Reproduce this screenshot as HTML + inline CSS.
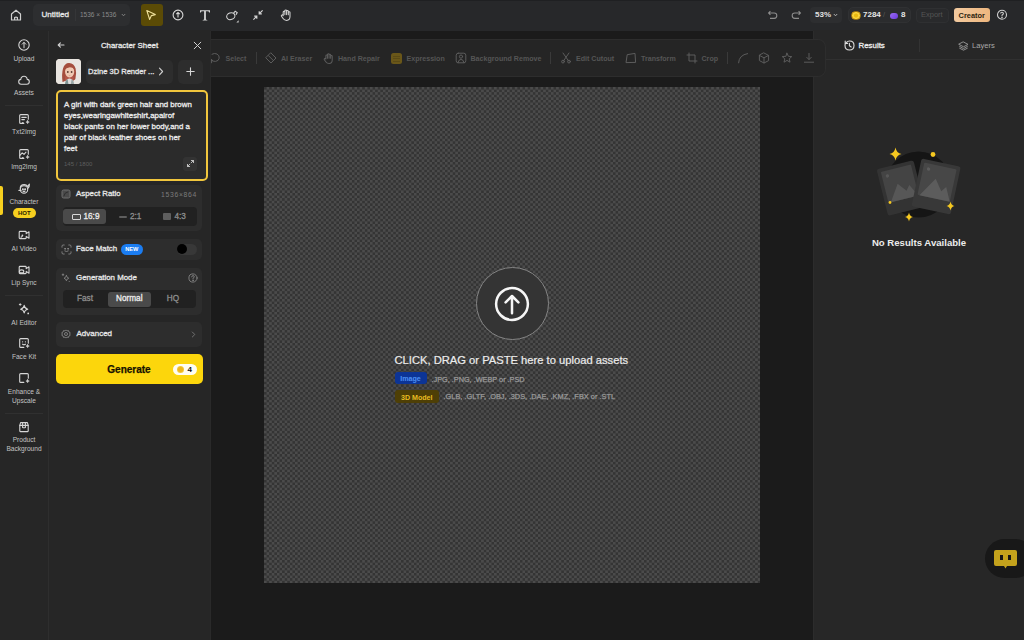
<!DOCTYPE html>
<html><head><meta charset="utf-8">
<style>
*{box-sizing:border-box;margin:0;padding:0}
html,body{width:1024px;height:640px;overflow:hidden;background:#1b1b1b;font-family:"Liberation Sans",sans-serif;color:#fff}
.abs{position:absolute}
svg{display:block}
#top{position:absolute;left:0;top:0;width:1024px;height:31px;background:#27282a;box-shadow:inset 0 1px 0 #1f2022}
#side{position:absolute;left:0;top:31px;width:49px;height:609px;background:#262626;border-right:1px solid #2e2e2e;box-shadow:0 -1px 0 #262626}
#panel{position:absolute;left:49px;top:31px;width:162px;height:609px;background:#262626;z-index:3;box-shadow:0 -1px 0 #262626;border-right:1px solid #2a2a2a}
#stage{position:absolute;left:210px;top:31px;width:603px;height:609px;background:#1b1b1b;overflow:visible;z-index:2}
#right{position:absolute;left:813px;top:31px;width:211px;height:609px;background:#272727;overflow:hidden;z-index:1;box-shadow:inset 1px 0 0 #2c2c2c,0 -1px 0 #272727}
.lbl{position:absolute;left:0;width:48px;text-align:center;font-size:6.6px;color:#c4c4c4;line-height:9px;white-space:nowrap}
.ico{position:absolute;left:16px;width:16px;height:16px}
.div{position:absolute;left:5px;width:38px;height:1px;background:#303030}
</style></head><body>
<div id="top">
 <svg class="abs" style="left:9px;top:8px" width="14" height="14" viewBox="0 0 14 14" fill="none" stroke="#cfcfcf" stroke-width="1.2" stroke-linejoin="round"><path d="M2.5 6 L7 2.2 L11.5 6 V12 H2.5 Z"/><path d="M5.6 12 V9.6 Q7 8.6 8.4 9.6 V12"/></svg>
 <div class="abs" style="left:33px;top:4px;width:97px;height:22px;background:#2d2e30;border-radius:5px"></div>
 <div class="abs" style="left:41.5px;top:8.8px;font-size:8.1px;font-weight:normal;-webkit-text-stroke:0.3px #e6e6e6;color:#e6e6e6;line-height:12px">Untitled</div>
 <div class="abs" style="left:75px;top:9px;width:1px;height:12px;background:#353638"></div>
 <div class="abs" style="left:80px;top:10px;font-size:6.5px;color:#8a8a8a;line-height:10px">1536 × 1536</div>
 <svg class="abs" style="left:121px;top:13px" width="5" height="4" viewBox="0 0 5 4" fill="none" stroke="#8a8a8a" stroke-width="0.9"><path d="M0.8 1 L2.5 2.8 L4.2 1"/></svg>
 <div class="abs" style="left:141px;top:4px;width:22px;height:22px;background:#5b4b06;border-radius:3px"></div>
 <svg class="abs" style="left:145px;top:9px" width="12" height="12" viewBox="0 0 12 12" fill="none" stroke="#efe09a" stroke-width="1.1" stroke-linejoin="round"><path d="M1.8 1.5 L10.3 5.6 L6.4 6.6 L4.6 10.4 Z"/></svg>
 <svg class="abs" style="left:172px;top:9px" width="12" height="12" viewBox="0 0 12 12" fill="none" stroke="#d8d8d8" stroke-width="1.1"><circle cx="6" cy="6" r="4.9"/><path d="M6 8.6 V3.6 M4.3 5.2 L6 3.5 L7.7 5.2"/></svg>
 <svg class="abs" style="left:199px;top:9px" width="12" height="12" viewBox="0 0 12 12"><path d="M1 1.2 H11 V3.6 H10.2 Q10 2.2 8.8 2.2 H6.9 V10.2 Q6.9 10.8 8.3 10.9 V11.4 H3.7 V10.9 Q5.1 10.8 5.1 10.2 V2.2 H3.2 Q2 2.2 1.8 3.6 H1 Z" fill="#d4d4d4"/></svg>
 <svg class="abs" style="left:225px;top:8px" width="16" height="16" viewBox="0 0 16 16" fill="none" stroke="#d4d4d4" stroke-width="1.1"><ellipse cx="5.8" cy="8.2" rx="4.2" ry="3.3" transform="rotate(-20 5.8 8.2)"/><path d="M8.6 5.2 L10.2 3.2 L12.2 4.6 L11 6.8"/><path d="M13.6 12.2 L13.6 14.4 L11.4 14.4 Z" fill="#d4d4d4" stroke="none"/></svg>
 <svg class="abs" style="left:252px;top:9px" width="12" height="12" viewBox="0 0 12 12" fill="none" stroke="#d4d4d4" stroke-width="1.2"><path d="M10.6 1.4 L7.4 4.6 M7.2 2.2 V4.8 H9.8"/><path d="M1.4 10.6 L4.6 7.4 M2.2 7.2 H4.8 V9.8"/></svg>
 <svg class="abs" style="left:279px;top:8px" width="14" height="14" viewBox="0 0 14 14" fill="none" stroke="#d4d4d4" stroke-width="1.05" stroke-linejoin="round" stroke-linecap="round"><path d="M4.2 7.6 V4 a0.85 0.85 0 0 1 1.7 0 V6.6 V2.8 a0.85 0.85 0 0 1 1.7 0 V6.6 V3.3 a0.85 0.85 0 0 1 1.7 0 V6.8 V4.6 a0.85 0.85 0 0 1 1.7 0 V8.6 Q11 12.4 7.6 12.4 Q5.4 12.4 4.3 10.8 L2.5 8.3 a0.85 0.85 0 0 1 1.4 -1 Z"/></svg>
 <svg class="abs" style="left:767px;top:9px" width="12" height="12" viewBox="0 0 12 12" fill="none" stroke="#8c8c8c" stroke-width="1.1"><path d="M3.4 2.2 L1.6 4 L3.4 5.8 M1.8 4 H7.2 Q9.8 4 9.8 6.6 Q9.8 9.4 7.2 9.4 H3"/></svg>
 <svg class="abs" style="left:790px;top:9px" width="12" height="12" viewBox="0 0 12 12" fill="none" stroke="#8c8c8c" stroke-width="1.1"><path d="M8.6 2.2 L10.4 4 L8.6 5.8 M10.2 4 H4.8 Q2.2 4 2.2 6.6 Q2.2 9.4 4.8 9.4 H9"/></svg>
 <div class="abs" style="left:810px;top:7px;width:32px;height:16px;background:#2d2e30;border-radius:4px"></div>
 <div class="abs" style="left:815px;top:10px;font-size:8px;font-weight:bold;color:#e0e0e0;line-height:10px">53%</div>
 <svg class="abs" style="left:833px;top:13px" width="5" height="4" viewBox="0 0 5 4" fill="none" stroke="#bdbdbd" stroke-width="0.9"><path d="M0.8 1 L2.5 2.8 L4.2 1"/></svg>
 <div class="abs" style="left:848px;top:7px;width:63px;height:16px;background:#2b2c2e;border:1px solid #303133;border-radius:5px"></div>
 <div class="abs" style="left:851px;top:10.5px;width:9.5px;height:9.5px;border-radius:50%;background:radial-gradient(circle,#e9b90f 30%,#f7d23a 45%);border:1px solid #b8860b"></div>
 <div class="abs" style="left:863px;top:10px;font-size:8px;font-weight:bold;color:#e6e6e6;line-height:10px">7284</div>
 <div class="abs" style="left:883px;top:10px;font-size:7.5px;color:#555;line-height:10px">/</div>
 <div class="abs" style="left:889.5px;top:12.5px;width:8.5px;height:6px;border-radius:3px;background:linear-gradient(135deg,#9b6cf6,#6a3ad8)"></div>
 <div class="abs" style="left:901px;top:10px;font-size:8px;font-weight:bold;color:#e6e6e6;line-height:10px">8</div>
 <div class="abs" style="left:916px;top:8px;width:33px;height:15px;background:#292a2c;border-radius:4px;border:1px solid #2f3032"></div>
 <div class="abs" style="left:921px;top:10px;font-size:7.5px;color:#555;line-height:10px">Export</div>
 <div class="abs" style="left:954px;top:8px;width:35.5px;height:14px;background:linear-gradient(90deg,#f2caa0,#edb67e);border-radius:3px"></div>
 <div class="abs" style="left:954px;top:9.5px;width:35.5px;text-align:center;font-size:7.4px;font-weight:bold;color:#2e1f10;line-height:11px">Creator</div>
 <svg class="abs" style="left:996px;top:9px" width="12" height="12" viewBox="0 0 12 12" fill="none" stroke="#cfcfcf" stroke-width="1.1"><circle cx="6" cy="5.8" r="4.5"/><path d="M4.6 4.6 Q4.6 3.3 6 3.3 Q7.4 3.3 7.4 4.5 Q7.4 5.4 6.4 5.8 Q6 6 6 6.9"/><circle cx="6" cy="8.4" r="0.3" fill="#cfcfcf"/></svg>
</div>
<div id="side">
<svg class="abs" style="left:17.0px;top:7.299999999999997px" width="14" height="14" viewBox="0 0 14 14" fill="none" stroke="#d6d6d6" stroke-width="1.1" stroke-linecap="round" stroke-linejoin="round"><circle cx="7" cy="7" r="5.2"/><path d="M7 9.8 V4.4 M5.2 6.2 L7 4.4 L8.8 6.2" stroke-width="1"/></svg>
<div class="lbl" style="top:23px">Upload</div>
<svg class="abs" style="left:17.0px;top:41.599999999999994px" width="14" height="14" viewBox="0 0 14 14" fill="none" stroke="#d6d6d6" stroke-width="1.1" stroke-linecap="round" stroke-linejoin="round"><path d="M4.2 11.2 H9.8 Q12.3 11.2 12.3 8.8 Q12.3 6.6 10.2 6.4 Q9.9 3.2 7 3.2 Q4.1 3.2 3.8 6.4 Q1.7 6.6 1.7 8.8 Q1.7 11.2 4.2 11.2 Z"/></svg>
<div class="lbl" style="top:57.2px">Assets</div>
<div class="div" style="top:74px"></div>
<svg class="abs" style="left:17.0px;top:80.5px" width="14" height="14" viewBox="0 0 14 14" fill="none" stroke="#d6d6d6" stroke-width="1.1" stroke-linecap="round" stroke-linejoin="round"><path d="M11.3 7.2 V3.6 Q11.3 2.6 10.3 2.6 H3.7 Q2.7 2.6 2.7 3.6 V10.4 Q2.7 11.4 3.7 11.4 H6.8"/><path d="M4.8 5.4 H9.2 M4.8 7.6 H7.4"/><rect x="5" y="10.2" width="1.6" height="1.6" fill="#d6d6d6" stroke="none"/><path d="M10.6 8.4 L11.1 9.6 L12.3 10.1 L11.1 10.6 L10.6 11.8 L10.1 10.6 L8.9 10.1 L10.1 9.6 Z" fill="#d6d6d6" stroke-width="0.5"/></svg>
<div class="lbl" style="top:96.0px">Txt2Img</div>
<svg class="abs" style="left:17.0px;top:115.5px" width="14" height="14" viewBox="0 0 14 14" fill="none" stroke="#d6d6d6" stroke-width="1.1" stroke-linecap="round" stroke-linejoin="round"><path d="M11.3 7.2 V3.6 Q11.3 2.6 10.3 2.6 H3.7 Q2.7 2.6 2.7 3.6 V10.4 Q2.7 11.4 3.7 11.4 H6.8"/><path d="M2.9 8.4 L5.2 5.8 L7 7.4 L9 5.2"/><rect x="5" y="10.2" width="1.6" height="1.6" fill="#d6d6d6" stroke="none"/><path d="M10.6 8.4 L11.1 9.6 L12.3 10.1 L11.1 10.6 L10.6 11.8 L10.1 10.6 L8.9 10.1 L10.1 9.6 Z" fill="#d6d6d6" stroke-width="0.5"/></svg>
<div class="lbl" style="top:131.0px">Img2Img</div>
<svg class="abs" style="left:17.0px;top:150.2px" width="14" height="14" viewBox="0 0 14 14" fill="none" stroke="#d6d6d6" stroke-width="1.1" stroke-linecap="round" stroke-linejoin="round"><circle cx="7" cy="8.4" r="3.7"/><path d="M3.2 7.2 Q3.4 3.6 7.2 3.6 Q9.6 3.6 10.6 5.4 L12.4 3.2 Q12.6 5.8 10.9 7.4"/><path d="M2 9.4 H4" stroke-width="1.4"/><circle cx="5.9" cy="8.2" r="0.45" fill="#d6d6d6"/><circle cx="8.1" cy="8.2" r="0.45" fill="#d6d6d6"/><path d="M5.9 10 Q7 10.8 8.1 10"/></svg>
<div class="lbl" style="top:165.6px">Character</div>
<div class="abs" style="left:12.5px;top:177px;width:23.5px;height:10px;border-radius:5px;background:#f6cf1f;color:#2a2300;font-size:6px;font-weight:bold;text-align:center;line-height:10px">HOT</div>
<div class="abs" style="left:0;top:154.5px;width:3px;height:29.5px;background:#f6cf1f;border-radius:0 2px 2px 0"></div>
<svg class="abs" style="left:17.0px;top:197.3px" width="14" height="14" viewBox="0 0 14 14" fill="none" stroke="#d6d6d6" stroke-width="1.1" stroke-linecap="round" stroke-linejoin="round"><path d="M9.2 5.6 V4.2 Q9.2 3.4 8.4 3.4 H3 Q2.2 3.4 2.2 4.2 V9.8 Q2.2 10.6 3 10.6 H8.4 Q9.2 10.6 9.2 9.8 V8.4 L12 10.2 V3.8 L9.2 5.6"/><circle cx="5.4" cy="7.3" r="0.9" fill="#d6d6d6" stroke="none"/><path d="M4 9.2 L5.2 8.4"/></svg>
<div class="lbl" style="top:213.3px">AI Video</div>
<svg class="abs" style="left:17.0px;top:232.2px" width="14" height="14" viewBox="0 0 14 14" fill="none" stroke="#d6d6d6" stroke-width="1.1" stroke-linecap="round" stroke-linejoin="round"><path d="M9.2 5.6 V4.2 Q9.2 3.4 8.4 3.4 H3 Q2.2 3.4 2.2 4.2 V9.8 Q2.2 10.6 3 10.6 H8.4 Q9.2 10.6 9.2 9.8 V8.4 L12 10.2 V3.8 L9.2 5.6"/><ellipse cx="4.6" cy="8.4" rx="2.2" ry="1.5"/></svg>
<div class="lbl" style="top:247.0px">Lip Sync</div>
<div class="div" style="top:263.7px"></div>
<svg class="abs" style="left:17.0px;top:270.6px" width="14" height="14" viewBox="0 0 14 14" fill="none" stroke="#d6d6d6" stroke-width="1.1" stroke-linecap="round" stroke-linejoin="round"><path d="M7.2 3.4 Q7.6 6.6 10.8 7.2 Q7.6 7.8 7.2 11 Q6.8 7.8 3.6 7.2 Q6.8 6.6 7.2 3.4 Z"/><path d="M3.2 1.6 V3.4 M2.3 2.5 H4.1" stroke-width="0.9"/><circle cx="11.2" cy="11.4" r="0.9" fill="#d6d6d6" stroke="none"/></svg>
<div class="lbl" style="top:286.6px">AI Editor</div>
<svg class="abs" style="left:17.0px;top:305.2px" width="14" height="14" viewBox="0 0 14 14" fill="none" stroke="#d6d6d6" stroke-width="1.1" stroke-linecap="round" stroke-linejoin="round"><path d="M11.3 7.2 V3.6 Q11.3 2.6 10.3 2.6 H3.7 Q2.7 2.6 2.7 3.6 V10.4 Q2.7 11.4 3.7 11.4 H6.8"/><circle cx="5.6" cy="5.8" r="0.6" fill="#d6d6d6" stroke="none"/><circle cx="8.4" cy="5.8" r="0.6" fill="#d6d6d6" stroke="none"/><path d="M5.6 8.2 Q7 9.2 8.4 8.2"/><path d="M10.6 8.4 L11.1 9.6 L12.3 10.1 L11.1 10.6 L10.6 11.8 L10.1 10.6 L8.9 10.1 L10.1 9.6 Z" fill="#d6d6d6" stroke-width="0.5"/></svg>
<div class="lbl" style="top:321.0px">Face Kit</div>
<svg class="abs" style="left:17.0px;top:339.8px" width="14" height="14" viewBox="0 0 14 14" fill="none" stroke="#d6d6d6" stroke-width="1.1" stroke-linecap="round" stroke-linejoin="round"><path d="M11.3 7.2 V3.6 Q11.3 2.6 10.3 2.6 H3.7 Q2.7 2.6 2.7 3.6 V10.4 Q2.7 11.4 3.7 11.4 H6.8"/><path d="M10.6 8.4 L11.1 9.6 L12.3 10.1 L11.1 10.6 L10.6 11.8 L10.1 10.6 L8.9 10.1 L10.1 9.6 Z" fill="#d6d6d6" stroke-width="0.5"/></svg>
<div class="lbl" style="top:356px;line-height:9px">Enhance &amp;<br>Upscale</div>
<div class="div" style="top:382px"></div>
<svg class="abs" style="left:17.0px;top:388.5px" width="14" height="14" viewBox="0 0 14 14" fill="none" stroke="#d6d6d6" stroke-width="1.1" stroke-linecap="round" stroke-linejoin="round"><path d="M2.8 5.4 H11.2 V11 Q11.2 11.6 10.6 11.6 H3.4 Q2.8 11.6 2.8 11 Z"/><path d="M2.8 5.4 L3.6 2.6 H10.4 L11.2 5.4"/><path d="M5.6 2.6 V5.4 M8.4 2.6 V5.4 M5.6 5.4 V7.4 Q7 8.2 8.4 7.4 V5.4"/></svg>
<div class="lbl" style="top:404.2px;line-height:9px">Product<br>Background</div>
</div>
<div id="panel">
<svg class="abs" style="left:8px;top:11px" width="8" height="6" viewBox="0 0 8 6" fill="none" stroke="#d0d0d0" stroke-width="1.1" stroke-linecap="round" stroke-linejoin="round"><path d="M7 3 H1.2 M3.4 0.8 L1.2 3 L3.4 5.2"/></svg>
<div class="abs" style="left:0px;top:9.5px;white-space:nowrap;width:161px;text-align:center;font-size:7.87px;font-weight:normal;-webkit-text-stroke:0.3px #e8e8e8;color:#e8e8e8;line-height:10px">Character Sheet</div>
<svg class="abs" style="left:144px;top:9.7px" width="9" height="9" viewBox="0 0 9 9" fill="none" stroke="#cfcfcf" stroke-width="1" stroke-linecap="round"><path d="M1.2 1.2 L7.8 7.8 M7.8 1.2 L1.2 7.8"/></svg>
<div class="abs" style="left:37px;top:28.5px;width:87px;height:24.5px;background:#2d2d2d;border-radius:5px"></div>
<div class="abs" style="left:7px;top:28px;width:25px;height:25px;border-radius:4px;background:#e6ddd3;overflow:hidden"><svg width="25" height="25" viewBox="0 0 25 25"><rect width="25" height="25" fill="#e9e5e0"/><path d="M6.5 23 Q5.5 15 7 9.5 Q8.8 3.8 13.2 4 Q18 4.2 19.6 9.6 Q20.8 14 19.4 20 Q18 22 16.5 21 L10 21 Q8 23 6.5 23 Z" fill="#a54e3e"/><path d="M9.2 22 Q8.6 18 9.6 16 L17 16 Q18 18 17.4 22 Z" fill="#b3584a"/><ellipse cx="13.6" cy="12.8" rx="4.6" ry="5.6" fill="#efc9b3"/><path d="M8.6 11 Q9.4 5.8 13.6 6 Q17.8 6 18.8 10.6 Q16.5 8 13 8.4 Q10.4 8.6 8.6 11 Z" fill="#a54e3e"/><ellipse cx="11.8" cy="13" rx="0.9" ry="1" fill="#5b3a30"/><ellipse cx="15.6" cy="13" rx="0.9" ry="1" fill="#5b3a30"/><path d="M12.8 16.4 Q13.6 16.9 14.4 16.4" stroke="#c07a6a" stroke-width="0.5" fill="none"/><path d="M9 25 Q9.6 20 13.5 19.6 Q17.4 20 18 25 Z" fill="#dcdcdc"/><path d="M9 25 Q9.4 21 11.6 20.2 L12.4 25 Z" fill="#7e9494"/><path d="M18 25 Q17.6 21 15.6 20.2 L14.8 25 Z" fill="#9aa6a6"/></svg></div>
<div class="abs" style="left:39px;top:35.5px;white-space:nowrap;font-size:7.57px;font-weight:normal;-webkit-text-stroke:0.3px #e6e6e6;color:#e6e6e6;line-height:10px">Dzine 3D Render ...</div>
<svg class="abs" style="left:109px;top:36px" width="6" height="9" viewBox="0 0 6 9" fill="none" stroke="#cfcfcf" stroke-width="1.1" stroke-linecap="round" stroke-linejoin="round"><path d="M1.5 1.2 L4.6 4.5 L1.5 7.8"/></svg>
<div class="abs" style="left:129px;top:28.5px;width:24.5px;height:24px;background:#2d2d2d;border-radius:5px"></div>
<svg class="abs" style="left:136.5px;top:36px" width="9" height="9" viewBox="0 0 9 9" fill="none" stroke="#d6d6d6" stroke-width="1.1" stroke-linecap="round"><path d="M4.5 0.8 V8.2 M0.8 4.5 H8.2"/></svg>
<div class="abs" style="left:7px;top:59px;width:151.5px;height:90.5px;border:2px solid #f1c63d;border-radius:5px;background:#2b2b2b"></div>
<div class="abs" style="left:15px;top:69px;white-space:nowrap;font-size:7.88px;font-weight:normal;-webkit-text-stroke:0.3px #ececec;color:#ececec;line-height:10.9px">A girl with dark green hair and brown<br>eyes,wearingawhiteshirt,apairof<br>black pants on her lower body,and a<br>pair of black leather shoes on her<br>feet</div>
<div class="abs" style="left:15px;top:128.5px;white-space:nowrap;font-size:6px;color:#5e5e5e;line-height:8px">145 / 1800</div>
<div class="abs" style="left:134px;top:125.5px;width:13.5px;height:14px;background:#333333;border-radius:3px"></div>
<svg class="abs" style="left:136.5px;top:128px" width="9" height="9" viewBox="0 0 9 9" fill="none" stroke="#cfcfcf" stroke-width="0.9" stroke-linecap="round" stroke-linejoin="round"><path d="M5.2 3.8 L7.4 1.6 M5.4 1.5 H7.5 V3.6 M3.8 5.2 L1.6 7.4 M1.5 5.4 V7.5 H3.6"/></svg>
<div class="abs" style="left:7px;top:153.5px;width:146px;height:46.5px;background:#2d2d2d;border-radius:5px"></div>
<svg class="abs" style="left:12px;top:158px" width="10" height="10" viewBox="0 0 10 10" ><rect x="1" y="1" width="8" height="8" rx="1.6" fill="#4a4a4a" stroke="#6e6e6e" stroke-width="1"/><path d="M2.8 7.2 Q3.4 3.4 7.2 2.8" fill="none" stroke="#2e2e2e" stroke-width="1"/></svg>
<div class="abs" style="left:27px;top:158px;white-space:nowrap;font-size:7.88px;font-weight:normal;-webkit-text-stroke:0.3px #e6e6e6;color:#e6e6e6;line-height:10px">Aspect Ratio</div>
<div class="abs" style="left:112px;top:159px;white-space:nowrap;font-size:6.8px;color:#7c7c7c;line-height:9px;letter-spacing:0.7px">1536×864</div>
<div class="abs" style="left:13.5px;top:176px;width:134px;height:18.5px;background:#212121;border-radius:4px"></div>
<div class="abs" style="left:14px;top:178px;width:42.5px;height:15px;background:#4a4a4a;border-radius:3px"></div>
<div class="abs" style="left:23px;top:182.5px;width:9px;height:6px;border:1.1px solid #d8d8d8;border-radius:1px"></div>
<div class="abs" style="left:34.5px;top:180.5px;white-space:nowrap;font-size:8.21px;font-weight:normal;-webkit-text-stroke:0.3px #ececec;color:#ececec;line-height:10px">16:9</div>
<div class="abs" style="left:70px;top:184.8px;width:8px;height:2.6px;background:#5e5e5e;border-radius:1px"></div>
<div class="abs" style="left:81px;top:180.5px;white-space:nowrap;font-size:8.21px;font-weight:normal;-webkit-text-stroke:0.3px #8e8e8e;color:#8e8e8e;line-height:10px">2:1</div>
<div class="abs" style="left:114px;top:181.5px;width:7.5px;height:7.5px;background:#5e5e5e;border-radius:1px"></div>
<div class="abs" style="left:125.5px;top:180.5px;white-space:nowrap;font-size:8.21px;font-weight:normal;-webkit-text-stroke:0.3px #8e8e8e;color:#8e8e8e;line-height:10px">4:3</div>
<div class="abs" style="left:7px;top:207.5px;width:146px;height:21.5px;background:#2d2d2d;border-radius:5px"></div>
<svg class="abs" style="left:11.5px;top:212.5px" width="11" height="11" viewBox="0 0 11 11" fill="none" stroke="#8a8a8a" stroke-width="0.9" stroke-linecap="round"><path d="M1 3.2 V2.2 Q1 1 2.2 1 H3.2 M7.8 1 H8.8 Q10 1 10 2.2 V3.2 M10 7.8 V8.8 Q10 10 8.8 10 H7.8 M3.2 10 H2.2 Q1 10 1 8.8 V7.8"/><circle cx="4" cy="4.8" r="0.45" fill="#8a8a8a"/><circle cx="7" cy="4.8" r="0.45" fill="#8a8a8a"/><path d="M3.8 7 Q5.5 8.2 7.2 7"/></svg>
<div class="abs" style="left:27px;top:213px;white-space:nowrap;font-size:7.88px;font-weight:normal;-webkit-text-stroke:0.3px #e6e6e6;color:#e6e6e6;line-height:10px">Face Match</div>
<div class="abs" style="left:72px;top:213px;width:21.5px;height:11px;background:#1b7df2;border-radius:6px;color:#fff;font-size:5.6px;font-weight:bold;text-align:center;line-height:11px">NEW</div>
<div class="abs" style="left:127.5px;top:213px;width:20px;height:10.5px;background:#383838;border-radius:6px"></div>
<div class="abs" style="left:128px;top:213.3px;width:10px;height:10px;background:#000;border-radius:50%"></div>
<div class="abs" style="left:7px;top:237px;width:146px;height:46.5px;background:#2d2d2d;border-radius:5px"></div>
<svg class="abs" style="left:11.5px;top:241.5px" width="11" height="11" viewBox="0 0 11 11" fill="none" stroke="#8a8a8a" stroke-width="0.8" stroke-linecap="round" stroke-linejoin="round"><path d="M5.4 2.6 Q5.8 4.8 7.8 5.2 Q5.8 5.6 5.4 7.8 Q5 5.6 3 5.2 Q5 4.8 5.4 2.6 Z"/><path d="M2 0.9 V2.5 M1.2 1.7 H2.8"/><circle cx="8.2" cy="8.4" r="0.5" fill="#8a8a8a" stroke="none"/></svg>
<div class="abs" style="left:27px;top:241.5px;white-space:nowrap;font-size:7.88px;font-weight:normal;-webkit-text-stroke:0.3px #e6e6e6;color:#e6e6e6;line-height:10px">Generation Mode</div>
<svg class="abs" style="left:138.5px;top:241.5px" width="10" height="10" viewBox="0 0 10 10" fill="none" stroke="#8a8a8a" stroke-width="0.85" stroke-linecap="round"><circle cx="5" cy="5" r="4.1"/><path d="M3.7 3.9 Q3.7 2.6 5 2.6 Q6.3 2.6 6.3 3.8 Q6.3 4.6 5.3 4.9 Q5 5.1 5 5.9"/><circle cx="5" cy="7.3" r="0.3" fill="#8a8a8a"/></svg>
<div class="abs" style="left:13.5px;top:259px;width:133.5px;height:18px;background:#212121;border-radius:4px"></div>
<div class="abs" style="left:13.5px;top:263px;white-space:nowrap;width:45px;text-align:center;font-size:8.21px;font-weight:normal;-webkit-text-stroke:0.3px #8e8e8e;color:#8e8e8e;line-height:10px">Fast</div>
<div class="abs" style="left:59px;top:261px;width:42.5px;height:14.5px;background:#4a4a4a;border-radius:3px;text-align:center;font-size:8.21px;font-weight:normal;-webkit-text-stroke:0.3px #ececec;color:#ececec;line-height:14.5px">Normal</div>
<div class="abs" style="left:101.5px;top:263px;white-space:nowrap;width:45px;text-align:center;font-size:8.21px;font-weight:normal;-webkit-text-stroke:0.3px #8e8e8e;color:#8e8e8e;line-height:10px">HQ</div>
<div class="abs" style="left:7px;top:290.5px;width:146px;height:25.5px;background:#2d2d2d;border-radius:5px"></div>
<svg class="abs" style="left:12px;top:298px" width="10" height="10" viewBox="0 0 10 10" fill="none" stroke="#8a8a8a" stroke-width="0.85" stroke-linejoin="round"><path d="M5 0.9 L6 1.9 L7.5 1.6 L7.9 3 L9.2 3.7 L8.7 5 L9.2 6.3 L7.9 7 L7.5 8.4 L6 8.1 L5 9.1 L4 8.1 L2.5 8.4 L2.1 7 L0.8 6.3 L1.3 5 L0.8 3.7 L2.1 3 L2.5 1.6 L4 1.9 Z"/><circle cx="5" cy="5" r="1.5"/></svg>
<div class="abs" style="left:27.5px;top:298px;white-space:nowrap;font-size:7.99px;font-weight:normal;-webkit-text-stroke:0.3px #e6e6e6;color:#e6e6e6;line-height:10px">Advanced</div>
<svg class="abs" style="left:141.5px;top:299.5px" width="5" height="7" viewBox="0 0 5 7" fill="none" stroke="#777" stroke-width="0.9" stroke-linecap="round" stroke-linejoin="round"><path d="M1.3 1 L3.8 3.5 L1.3 6"/></svg>
<div class="abs" style="left:7px;top:323px;width:146.5px;height:30px;background:#fcd60c;border-radius:5px"></div>
<div class="abs" style="left:7px;top:332.5px;white-space:nowrap;width:146px;text-align:center;font-size:10px;font-weight:bold;-webkit-text-stroke:0.25px #171200;color:#171200;line-height:12px">Generate</div>
<div class="abs" style="left:123.5px;top:332.5px;width:24px;height:11.5px;background:#fffdf2;border-radius:6px"></div>
<div class="abs" style="left:127.5px;top:334.8px;width:7px;height:7px;background:radial-gradient(circle,#eeb61a 40%,#f5cf45 75%);border-radius:50%"></div>
<div class="abs" style="left:138.5px;top:334px;white-space:nowrap;font-size:8px;font-weight:bold;color:#111;line-height:10.5px">4</div>
</div>
<div id="stage">
<div class="abs" style="left:54px;top:56px;width:496px;height:495.5px;overflow:hidden"><svg width="496" height="496" style="filter:blur(0.35px)"><defs><pattern id="ck" patternUnits="userSpaceOnUse" width="5.17" height="5.17"><rect width="5.17" height="5.17" fill="#343434"/><rect x="2.585" width="2.585" height="2.585" fill="#4b4b4b"/><rect y="2.585" width="2.585" height="2.585" fill="#4b4b4b"/></pattern></defs><rect width="496" height="496" fill="url(#ck)"/></svg></div>
<div class="abs" style="left:0px;top:8px;width:616px;height:38px;background:#252525;border:1px solid #2d2d2d;border-left:none;border-radius:0 8px 8px 0"></div>
<svg class="abs" style="left:-2px;top:21px" width="13" height="12" viewBox="0 0 13 12" fill="none" stroke="#5c5c5c" stroke-width="1" stroke-linecap="round" stroke-linejoin="round"><path d="M4 2.2 Q6.5 0.8 9 2 Q11.6 3.4 11.2 6.2 Q10.6 9 7.6 9.4 Q5 9.6 3.4 8.2"/><path d="M1.4 6.4 L4.8 8.6 M3.6 10.8 V7.6 L1.2 8.6"/></svg>
<div class="abs" style="left:15.5px;top:22.5px;white-space:nowrap;font-size:7.1px;font-weight:bold;color:#555;line-height:10px">Select</div>
<div class="abs" style="left:46px;top:21px;width:1px;height:12px;background:#3a3a3a"></div>
<svg class="abs" style="left:55px;top:21px" width="12" height="12" viewBox="0 0 12 12" fill="none" stroke="#5c5c5c" stroke-width="1" stroke-linecap="round" stroke-linejoin="round"><path d="M6 1 L11 6 L6 11 L1 6 Z"/><path d="M3.4 3.6 L8.4 8.6"/></svg>
<div class="abs" style="left:71px;top:22.5px;white-space:nowrap;font-size:7.1px;font-weight:bold;color:#555;line-height:10px">AI Eraser</div>
<svg class="abs" style="left:112px;top:20.5px" width="13" height="13" viewBox="0 0 14 14" fill="none" stroke="#5c5c5c" stroke-width="1.1" stroke-linejoin="round" stroke-linecap="round"><path d="M4.2 7.6 V4 a0.85 0.85 0 0 1 1.7 0 V6.6 V2.8 a0.85 0.85 0 0 1 1.7 0 V6.6 V3.3 a0.85 0.85 0 0 1 1.7 0 V6.8 V4.6 a0.85 0.85 0 0 1 1.7 0 V8.6 Q11 12.4 7.6 12.4 Q5.4 12.4 4.3 10.8 L2.5 8.3 a0.85 0.85 0 0 1 1.4 -1 Z"/></svg>
<div class="abs" style="left:128px;top:22.5px;white-space:nowrap;font-size:7.1px;font-weight:bold;color:#555;line-height:10px">Hand Repair</div>
<div class="abs" style="left:181px;top:21.5px;width:11px;height:11px;background:#6a5719;border-radius:2.5px"></div>
<div class="abs" style="left:183px;top:24.5px;width:7px;height:1px;background:#5a4a16"></div>
<div class="abs" style="left:183px;top:27px;width:7px;height:1px;background:#5a4a16"></div>
<div class="abs" style="left:183px;top:29.5px;width:7px;height:1px;background:#5a4a16"></div>
<div class="abs" style="left:196.5px;top:22.5px;white-space:nowrap;font-size:7.1px;font-weight:bold;color:#555;line-height:10px">Expression</div>
<svg class="abs" style="left:245px;top:21px" width="12" height="12" viewBox="0 0 12 12" fill="none" stroke="#5c5c5c" stroke-width="1" stroke-linecap="round" stroke-linejoin="round"><rect x="1.2" y="1.2" width="9.6" height="9.6" rx="2"/><circle cx="6" cy="4.6" r="1.6"/><path d="M3 10.8 Q3.4 7.4 6 7.4 Q8.6 7.4 9 10.8"/></svg>
<div class="abs" style="left:260.5px;top:22.5px;white-space:nowrap;font-size:7.1px;font-weight:bold;color:#555;line-height:10px">Background Remove</div>
<div class="abs" style="left:340px;top:21px;width:1px;height:12px;background:#3a3a3a"></div>
<svg class="abs" style="left:349.5px;top:21px" width="12" height="12" viewBox="0 0 12 12" fill="none" stroke="#5c5c5c" stroke-width="1" stroke-linecap="round" stroke-linejoin="round"><path d="M3 1 L8.6 9 M9 1 L3.4 9"/><circle cx="3" cy="9.6" r="1.4"/><circle cx="9" cy="9.6" r="1.4"/></svg>
<div class="abs" style="left:366px;top:22.5px;white-space:nowrap;font-size:7.1px;font-weight:bold;color:#555;line-height:10px">Edit Cutout</div>
<svg class="abs" style="left:415px;top:21px" width="12" height="12" viewBox="0 0 12 12" fill="none" stroke="#5c5c5c" stroke-width="1" stroke-linecap="round" stroke-linejoin="round"><path d="M2.6 2.6 L10 1.4 L10.6 10.4 L1.4 10.6 Z"/></svg>
<div class="abs" style="left:431px;top:22.5px;white-space:nowrap;font-size:7.1px;font-weight:bold;color:#555;line-height:10px">Transform</div>
<svg class="abs" style="left:476px;top:21px" width="12" height="12" viewBox="0 0 12 12" fill="none" stroke="#5c5c5c" stroke-width="1" stroke-linecap="round" stroke-linejoin="round"><path d="M3 1 V9 H11 M1 3 H9 V11"/></svg>
<div class="abs" style="left:491.5px;top:22.5px;white-space:nowrap;font-size:7.1px;font-weight:bold;color:#555;line-height:10px">Crop</div>
<div class="abs" style="left:517px;top:21px;width:1px;height:12px;background:#3a3a3a"></div>
<svg class="abs" style="left:527px;top:21px" width="12" height="12" viewBox="0 0 12 12" fill="none" stroke="#5c5c5c" stroke-width="1" stroke-linecap="round" stroke-linejoin="round"><path d="M1.6 10.8 Q2 3 10.6 1.6"/></svg>
<svg class="abs" style="left:548px;top:21px" width="12" height="12" viewBox="0 0 12 12" fill="none" stroke="#5c5c5c" stroke-width="1" stroke-linecap="round" stroke-linejoin="round"><path d="M6 1 L10.6 3.4 V8.6 L6 11 L1.4 8.6 V3.4 Z M1.4 3.4 L6 5.8 L10.6 3.4 M6 5.8 V11"/></svg>
<svg class="abs" style="left:570.5px;top:21px" width="12" height="12" viewBox="0 0 12 12" fill="none" stroke="#5c5c5c" stroke-width="1" stroke-linecap="round" stroke-linejoin="round"><path d="M6 1.2 L7.4 4.3 L10.8 4.6 L8.2 6.8 L9 10.2 L6 8.4 L3 10.2 L3.8 6.8 L1.2 4.6 L4.6 4.3 Z"/></svg>
<svg class="abs" style="left:592.5px;top:21px" width="12" height="12" viewBox="0 0 12 12" fill="none" stroke="#5c5c5c" stroke-width="1" stroke-linecap="round" stroke-linejoin="round"><path d="M6 1.4 V7.4 M3.8 5.4 L6 7.6 L8.2 5.4 M1.4 10.2 H10.6"/></svg>
<div class="abs" style="left:265.5px;top:236px;width:73px;height:73px;background:#343434;border:1.4px solid #858585;border-radius:50%"></div>
<svg class="abs" style="left:284px;top:255px" width="36" height="36" viewBox="0 0 36 36" fill="none" stroke="#f6f6f6" stroke-width="2.5" stroke-linecap="round" stroke-linejoin="round"><circle cx="18" cy="18" r="15.9"/><path d="M18 27.2 V10.4 M11.6 16.4 L18 10 L24.4 16.4"/></svg>
<div class="abs" style="left:184.5px;top:322.5px;white-space:nowrap;font-size:11.2px;color:#ededed;-webkit-text-stroke:0.2px #ededed;line-height:13px">CLICK, DRAG or PASTE here to upload assets</div>
<div class="abs" style="left:184.5px;top:341.2px;width:32px;height:12px;background:#0c3496;border-radius:3px;color:#4d90f4;font-size:7.1px;font-weight:bold;text-align:center;line-height:15.5px">Image</div>
<div class="abs" style="left:221.5px;top:344px;white-space:nowrap;font-size:7.31px;font-weight:normal;-webkit-text-stroke:0.25px #9a9a9a;color:#9a9a9a;line-height:10px">.JPG, .PNG, .WEBP or .PSD</div>
<div class="abs" style="left:184.5px;top:359.2px;width:44.5px;height:12.5px;background:#4e3f06;border-radius:3px;color:#e8bd22;font-size:7.1px;font-weight:bold;text-align:center;line-height:16.2px">3D Model</div>
<div class="abs" style="left:233.5px;top:361px;white-space:nowrap;font-size:7.4px;font-weight:normal;-webkit-text-stroke:0.25px #9a9a9a;color:#9a9a9a;line-height:10px">.GLB, .GLTF, .OBJ, .3DS, .DAE, .KMZ, .FBX or .STL</div>
</div>
<div id="right">
<div class="abs" style="left:0px;top:28px;width:211px;height:1px;background:#303030"></div>
<svg class="abs" style="left:30.5px;top:9px" width="11" height="11" viewBox="0 0 11 11" fill="none" stroke="#dedede" stroke-width="1.1" stroke-linecap="round" stroke-linejoin="round"><path d="M2.2 2.6 Q3.6 1 5.6 1 Q10 1 10 5.5 Q10 10 5.5 10 Q1 10 1 5.5 Q1 4.6 1.3 3.8"/><path d="M1.2 1 V3.4 H3.6"/><path d="M5.4 3.2 V5.8 L7.2 7"/></svg>
<div class="abs" style="left:45.5px;top:9.5px;white-space:nowrap;font-size:7.88px;font-weight:normal;-webkit-text-stroke:0.3px #ececec;color:#ececec;line-height:10px">Results</div>
<div class="abs" style="left:106px;top:8px;width:1px;height:13px;background:#333"></div>
<svg class="abs" style="left:144.5px;top:9.5px" width="11" height="10" viewBox="0 0 11 10" fill="none" stroke="#9a9a9a" stroke-width="0.9" stroke-linecap="round" stroke-linejoin="round"><path d="M5.5 1 L10 3.4 L5.5 5.8 L1 3.4 Z"/><path d="M1.6 5.4 L5.5 7.6 L9.4 5.4"/><path d="M1.6 7.2 L5.5 9.2 L9.4 7.2"/></svg>
<div class="abs" style="left:159px;top:9.5px;white-space:nowrap;font-size:7.6px;color:#a8a8a8;line-height:10px">Layers</div>
<svg class="abs" style="left:55px;top:109px" width="100" height="90" viewBox="868 140 100 90">
<circle cx="918.5" cy="184.5" r="33" fill="#151515"/>
<g transform="rotate(-14 901 189)"><rect x="882" y="164" width="38" height="48" rx="2.5" fill="#333333"/><rect x="885.5" y="167.5" width="31" height="32" rx="1" fill="#444444"/><path d="M888 199.5 L899 183 L906 192 L910 187 L916.5 199.5 Z" fill="#575757"/><circle cx="891" cy="173" r="1.7" fill="#575757"/></g>
<g transform="rotate(12 936 187)"><rect x="916" y="162" width="40" height="49" rx="2.5" fill="#383838"/><rect x="919.5" y="165.5" width="33" height="33" rx="1" fill="#474747"/><path d="M921.5 198.5 L934 179 L942 190 L946 185 L952.5 198.5 Z" fill="#5c5c5c"/><circle cx="925" cy="171" r="1.7" fill="#5c5c5c"/></g>
<path d="M895.5 147.5 Q896.5 153 901.5 154 Q896.5 155 895.5 160.5 Q894.5 155 889.5 154 Q894.5 153 895.5 147.5 Z" fill="#f5c820"/>
<circle cx="933" cy="154.5" r="2.4" fill="#f5c820"/>
<path d="M950.5 201.5 Q951.2 205.3 954.5 206 Q951.2 206.7 950.5 210.5 Q949.8 206.7 946.5 206 Q949.8 205.3 950.5 201.5 Z" fill="#f5c820"/>
<path d="M909 212.5 Q909.7 216.3 913 217 Q909.7 217.7 909 221.5 Q908.3 217.7 905 217 Q908.3 216.3 909 212.5 Z" fill="#f5c820"/>
<circle cx="890" cy="202.5" r="1.4" fill="#f5c820"/>
</svg>
<div class="abs" style="left:0px;top:205.5px;white-space:nowrap;width:211px;text-align:center;padding-left:1px;font-size:9.6px;font-weight:bold;color:#ececec;line-height:12px">No Results Available</div>
<div class="abs" style="left:171.5px;top:508px;width:50px;height:39px;background:#181818;border-radius:20px"></div>
<svg class="abs" style="left:180px;top:518px" width="25" height="21" viewBox="0 0 25 21" ><path d="M3 1 H22 Q24 1 24 3 V15 Q24 17 22 17 H14 L12.5 19.5 L11 17 H3 Q1 17 1 15 V3 Q1 1 3 1 Z" fill="#c4a21c"/><rect x="7" y="6" width="3" height="5" fill="#161616"/><rect x="15" y="6" width="3" height="5" fill="#161616"/></svg>
</div>
</body></html>
